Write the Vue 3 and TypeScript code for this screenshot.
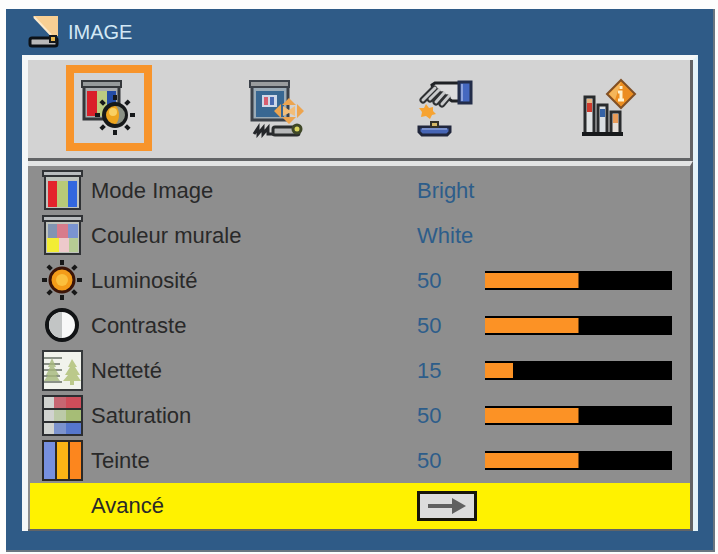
<script setup lang="ts">
import { reactive, ref } from 'vue'

type IconName = 'mode' | 'wall' | 'brightness' | 'contrast' | 'sharpness' | 'saturation' | 'tint'

interface Row {
  id: IconName
  label: string
  value: string | number
  slider: boolean
}

const tabs = [
  { id: 'image', label: 'Image' },
  { id: 'display', label: 'Affichage' },
  { id: 'setup', label: 'Configuration' },
  { id: 'options', label: 'Options' },
]
const activeTab = ref('image')

const rows = reactive<Row[]>([
  { id: 'mode', label: 'Mode Image', value: 'Bright', slider: false },
  { id: 'wall', label: 'Couleur murale', value: 'White', slider: false },
  { id: 'brightness', label: 'Luminosité', value: 50, slider: true },
  { id: 'contrast', label: 'Contraste', value: 50, slider: true },
  { id: 'sharpness', label: 'Netteté', value: 15, slider: true },
  { id: 'saturation', label: 'Saturation', value: 50, slider: true },
  { id: 'tint', label: 'Teinte', value: 50, slider: true },
])

const rays = [0, 45, 90, 135, 180, 225, 270, 315]
</script>

<template>
  <main class="page">
    <section class="osd">
      <header class="title">
        <svg class="title-icon" viewBox="0 0 32 34" aria-hidden="true">
          <path d="M5 1H30V21H23Z" fill="#f8cf93" />
          <path d="M6 2L23 20" stroke="#fbe9cc" stroke-width="2" />
          <rect x="2" y="23" width="27" height="8" rx="2" fill="#b9b9b9" stroke="#0c1116" stroke-width="3" />
          <rect x="22" y="21" width="6" height="6" fill="#e8b64c" stroke="#14181c" stroke-width="2" />
        </svg>
        <h1>IMAGE</h1>
      </header>

      <div class="panel">
        <nav class="tabs">
          <button
            v-for="tab in tabs"
            :key="tab.id"
            type="button"
            class="tab"
            :class="{ active: tab.id === activeTab }"
            :aria-label="tab.label"
            @click="activeTab = tab.id"
          >
            <svg v-if="tab.id === 'image'" viewBox="0 2 60 60" aria-hidden="true">
              <path d="M5 11V43H40V11" fill="#a9acae" stroke="#34373a" stroke-width="3" />
              <rect x="8" y="15" width="10" height="25" fill="#da2029" />
              <rect x="18" y="15" width="10" height="25" fill="#bccb81" />
              <rect x="28" y="15" width="9" height="25" fill="#244ca6" />
              <rect x="3" y="5" width="39" height="6" fill="#969a9b" stroke="#34373a" stroke-width="2" />
              <g stroke="#16181a" stroke-width="4">
                <line v-for="a in rays" :key="a" x1="36" y1="19" x2="36" y2="24" :transform="`rotate(${a} 36 39)`" />
              </g>
              <circle cx="36" cy="39" r="11" fill="#eea51e" stroke="#17191a" stroke-width="4" />
              <path d="M37 30A9 9 0 0 1 37 48C41 43 41 35 37 30Z" fill="#8a9186" />
              <circle cx="34" cy="36" r="4" fill="#f9d063" />
            </svg>

            <svg v-else-if="tab.id === 'display'" viewBox="0 0 60 60" aria-hidden="true">
              <path d="M6 9V42H42V9" fill="#9babb7" stroke="#3b4149" stroke-width="3" />
              <rect x="10" y="13" width="28" height="26" fill="#386792" />
              <rect x="16" y="17" width="15" height="12" fill="#ced7e8" />
              <rect x="18" y="19" width="4" height="8" fill="#d85e70" />
              <rect x="24" y="19" width="4" height="8" fill="#4869b1" />
              <rect x="4" y="3" width="39" height="6" fill="#999c9e" stroke="#3b4149" stroke-width="2" />
              <path d="M43 20L50 27H36ZM43 46L36 39H50ZM28 33L35 26V40ZM58 33L51 26V40Z" fill="#eda44e" />
              <path d="M37 28L43 32L49 28V38L43 35L37 38Z" fill="#f2bd78" />
              <path d="M8 56L12 50V56L17 50V56L22 50V56H27" fill="none" stroke="#24262a" stroke-width="3" />
              <rect x="27" y="49" width="26" height="8" rx="2" fill="#b7b8b9" stroke="#2a2c2d" stroke-width="3" />
              <circle cx="51" cy="51" r="4" fill="#d9d45c" stroke="#3f4828" stroke-width="3" />
            </svg>

            <svg v-else-if="tab.id === 'setup'" viewBox="-3 0 60 60" aria-hidden="true">
              <path d="M40 5H19L16 7L17 11L36 23H44V5Z" fill="#dddddd" stroke="#202225" stroke-width="3" />
              <path d="M18 11L7 22M21 14L14 21M26 17L20 24M31 20L26 26" fill="none" stroke="#2e3032" stroke-width="7" stroke-linecap="round" />
              <path d="M19 10L7 22M23 12L14 21M28 15L20 24M33 18L26 26" fill="none" stroke="#c9cacb" stroke-width="3" stroke-linecap="round" />
              <rect x="43" y="4" width="12" height="21" fill="#4568c0" stroke="#232d49" stroke-width="3" />
              <path d="M46 6V23" stroke="#8ba1db" stroke-width="2" />
              <path d="M10 26L13 30L17 29V33L20 36L16 37L14 41L10 38L5 39L6 34L3 30L8 30Z" fill="#f6a332" />
              <path d="M3 49H34V54L31 57H6L3 54Z" fill="#4665b5" stroke="#20263c" stroke-width="3" />
              <path d="M6 51H31" stroke="#7890cd" stroke-width="2" />
              <rect x="15" y="44" width="7" height="5" fill="#d5b867" stroke="#333129" stroke-width="2" />
            </svg>

            <svg v-else viewBox="0 0 60 60" aria-hidden="true">
              <g stroke="#292b2d" stroke-width="3">
                <rect x="5" y="19" width="9" height="37" fill="#dfe2e3" />
                <rect x="18" y="27" width="9" height="29" fill="#d9dee3" />
                <rect x="31" y="34" width="9" height="22" fill="#e5dfd9" />
              </g>
              <path d="M7 21H12V25H7Z" fill="#e6b583" />
              <path d="M7 25H12V34H7Z" fill="#cf3a2d" />
              <path d="M20 31H25V39H20Z" fill="#3462a6" />
              <path d="M33 36H38V45H33Z" fill="#e99b57" />
              <path d="M2 56H43" stroke="#17191b" stroke-width="4" />
              <path d="M41 2L55 16L41 30L27 16Z" fill="#ec8e21" stroke="#805025" stroke-width="2" />
              <path d="M41 4L29 16L35 22Z" fill="#f4b65a" />
              <path d="M41 8V11M38 14H41V22M38 22H44" fill="none" stroke="#fff1cc" stroke-width="3" />
            </svg>
          </button>
        </nav>

        <div class="list">
          <div v-for="row in rows" :key="row.id" class="row">
            <svg class="row-icon" viewBox="0 0 41 41" aria-hidden="true">
              <template v-if="row.id === 'mode' || row.id === 'wall'">
                <path d="M3 6V39H38V6" fill="#bfc3bd" stroke="#303235" stroke-width="2" />
                <g v-if="row.id === 'mode'">
                  <rect x="6" y="11" width="9" height="26" fill="#e4242b" />
                  <rect x="15" y="11" width="11" height="26" fill="#b8ca78" />
                  <rect x="26" y="11" width="9" height="26" fill="#3267df" />
                </g>
                <g v-else>
                  <rect x="6" y="9" width="9" height="14" fill="#8194b2" />
                  <rect x="15" y="9" width="11" height="14" fill="#d77b8b" />
                  <rect x="26" y="9" width="10" height="14" fill="#7a94d0" />
                  <rect x="5" y="23" width="12" height="14" fill="#f2ed35" />
                  <rect x="17" y="23" width="10" height="14" fill="#edc9cb" />
                  <rect x="27" y="23" width="9" height="14" fill="#b6cc94" />
                </g>
                <rect x="1" y="1" width="39" height="5" fill="#b9bcbe" stroke="#303235" stroke-width="2" />
              </template>

              <template v-else-if="row.id === 'brightness'">
                <g stroke="#171717" stroke-width="4">
                  <line v-for="a in rays" :key="a" x1="20" y1="0" x2="20" y2="5" :transform="`rotate(${a} 20 20)`" />
                </g>
                <circle cx="20" cy="20" r="12" fill="#f49c19" stroke="#3c1508" stroke-width="3" />
                <circle cx="20" cy="20" r="6" fill="#fbc03d" />
              </template>

              <template v-else-if="row.id === 'contrast'">
                <circle cx="20" cy="20" r="15" fill="#f7f8f8" stroke="#111315" stroke-width="4" />
                <path d="M20 7A13 13 0 0 0 20 33Z" fill="#c2c5c5" />
              </template>

              <template v-else-if="row.id === 'sharpness'">
                <rect x="1" y="1" width="39" height="39" fill="#f1f3ec" stroke="#35383a" stroke-width="2" />
                <path d="M2 8H20M2 14H18M2 20H20M2 26H18M2 32H20" stroke="#8b9288" stroke-width="2" />
                <path d="M10 8L14 17H12L17 25H14L18 31H2L6 25H4L8 17H6Z" fill="#a5b87c" opacity="0.8" />
                <path d="M30 9L35 17H33L38 25H35L39 31H32V35H28V31H21L26 25H23L28 17H26Z" fill="#bbc98a" />
              </template>

              <template v-else-if="row.id === 'saturation'">
                <rect x="1" y="1" width="39" height="39" fill="#d1d3d0" />
                <rect x="12" y="1" width="12" height="13" fill="#c76672" />
                <rect x="24" y="1" width="16" height="13" fill="#cf4d5a" />
                <rect x="12" y="14" width="12" height="13" fill="#bccaa8" />
                <rect x="24" y="14" width="16" height="13" fill="#a6bd76" />
                <rect x="12" y="27" width="12" height="13" fill="#7c93cd" />
                <rect x="24" y="27" width="16" height="13" fill="#5677cc" />
                <path d="M1 1H40V40H1ZM1 14H40M1 27H40" fill="none" stroke="#2c2e31" stroke-width="2" />
              </template>

              <template v-else>
                <rect x="1" y="1" width="13" height="39" fill="#7790df" />
                <rect x="14" y="1" width="13" height="39" fill="#fbb415" />
                <rect x="27" y="1" width="13" height="39" fill="#fc861e" />
                <path d="M1 1H40V40H1ZM14 1V40M27 1V40" fill="none" stroke="#2b2824" stroke-width="2" />
              </template>
            </svg>

            <template v-if="row.slider">
              <label class="name" :for="row.id">{{ row.label }}</label>
              <output class="value" :for="row.id">{{ row.value }}</output>
              <input
                :id="row.id"
                v-model.number="row.value"
                class="slider"
                type="range"
                min="0"
                max="100"
                :style="{ '--level': `${row.value}%` }"
              />
            </template>
            <template v-else>
              <span class="name">{{ row.label }}</span>
              <span class="value">{{ row.value }}</span>
            </template>
          </div>

          <div class="row advanced">
            <label class="name" for="advanced">Avancé</label>
            <button id="advanced" type="button" class="enter">
              <svg viewBox="0 0 40 20" aria-hidden="true">
                <path d="M1 8H25V2L39 10L25 18V12H1Z" fill="#606060" />
              </svg>
            </button>
          </div>
        </div>
      </div>
    </section>
  </main>
</template>

<style>
body {
  margin: 0;
  background: #fdfdfd;
}
</style>

<style scoped>
.page {
  padding: 9px 3px 0 6px;
  font-family: "Liberation Sans", Arial, sans-serif;
  font-size: 22px;
  line-height: 26px;
}

.osd {
  padding: 0 15px 19px 16px;
  background: #2f5b87;
  border-right: 2px solid #6a7580;
  border-bottom: 2px solid #6a7580;
}

.title {
  display: flex;
  align-items: center;
  gap: 8px;
  height: 46px;
  padding-left: 6px;
}

.title-icon {
  width: 32px;
  height: 34px;
}

h1 {
  margin: 0;
  color: #d3e8f5;
  font-size: 20px;
  font-weight: 400;
}

.panel {
  border-top: 5px solid #f4f7f8;
  border-left: 6px solid #f4f7f8;
  border-right: 5px solid #e4f4fa;
}

.tabs {
  display: flex;
  justify-content: space-between;
  padding: 5px 37px 7px 38px;
  background: #d3d3d3;
  border-right: 3px solid #626466;
  border-bottom: 3px solid #626466;
}

.tab {
  box-sizing: border-box;
  width: 86px;
  height: 86px;
  padding: 5px;
  background: none;
  border: 8px solid transparent;
}

.tab.active {
  border-color: #f7942b;
}

.tab svg {
  display: block;
  width: 60px;
  height: 60px;
}

.list {
  padding-top: 2px;
  background: #8e8e8e;
  border-top: 5px solid #e3e4e4;
  border-right: 3px solid #626466;
  border-bottom: 2px solid #626466;
}

.row {
  display: grid;
  grid-template-columns: 41px minmax(0, 1fr) 60px minmax(100px, 187px);
  column-gap: 8px;
  align-items: center;
  height: 45px;
  padding: 0 18px 0 14px;
}

.row-icon {
  width: 41px;
  height: 41px;
}

.name {
  grid-column: 2;
  color: #292929;
}

.value {
  color: #2d5d8a;
}

.slider {
  width: 100%;
  height: 19px;
  margin: 0;
  appearance: none;
  background: linear-gradient(#fc9225, #fc9225) 0 50% / var(--level) 15px no-repeat #000;
}

.slider::-webkit-slider-thumb {
  appearance: none;
  width: 1px;
  height: 19px;
  opacity: 0;
}

.advanced {
  height: 46px;
  margin-left: 2px;
  padding-left: 12px;
  background: #fff200;
}

.enter {
  box-sizing: border-box;
  width: 60px;
  height: 30px;
  padding: 2px 7px;
  background: #dcdcdc;
  border: 3px solid #17150a;
}

.enter svg {
  display: block;
  width: 40px;
  height: 20px;
}
</style>
